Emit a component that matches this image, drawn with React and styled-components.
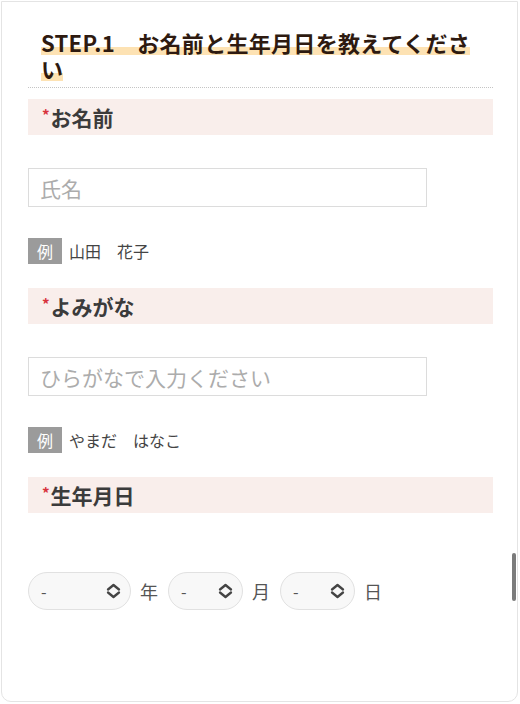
import React from 'react';
import styled, { createGlobalStyle } from 'styled-components';

const fields = [
	{ id: 'name', label: 'お名前', placeholder: '氏名', example: '山田　花子' },
	{ id: 'kana', label: 'よみがな', placeholder: 'ひらがなで入力ください', example: 'やまだ　はなこ' },
];

const dateParts = [
	{ id: 'year', unit: '年', width: 103 },
	{ id: 'month', unit: '月', width: 75 },
	{ id: 'day', unit: '日', width: 75 },
];

function UpDownIcon() {
	return (
		<svg width="15" height="16" viewBox="0 0 15 16" fill="none" stroke="#444" strokeWidth="2.3" strokeLinecap="round" strokeLinejoin="round">
			<path d="M2 6.5 L7.5 2 L13 6.5" />
			<path d="M2 9.5 L7.5 14 L13 9.5" />
		</svg>
	);
}

export default function App() {
	return (
		<>
			<GlobalStyle />
			<Card>
				<Inner>
					<Heading>
						<Marker>STEP.1　お名前と生年月日を教えてください</Marker>
					</Heading>

					{fields.map(field => (
						<Field key={field.id}>
							<Label>
								<Required>*</Required>
								{field.label}
							</Label>
							<TextInput placeholder={field.placeholder} />
							<Example>
								<ExampleBadge>例</ExampleBadge>
								<ExampleText>{field.example}</ExampleText>
							</Example>
						</Field>
					))}

					<Label>
						<Required>*</Required>
						生年月日
					</Label>
					<DateRow>
						{dateParts.map(part => (
							<DatePart key={part.id}>
								<SelectWrap $width={part.width}>
									<Select defaultValue="">
										<option value="">-</option>
									</Select>
									<IconSlot>
										<UpDownIcon />
									</IconSlot>
								</SelectWrap>
								<Unit>{part.unit}</Unit>
							</DatePart>
						))}
					</DateRow>
				</Inner>
				<ScrollThumb />
			</Card>
		</>
	);
}

const GlobalStyle = createGlobalStyle`
	* {
		box-sizing: border-box;
	}
	body {
		margin: 0;
		background: #fff;
		font-family: 'Noto Sans CJK JP', 'Noto Sans', sans-serif;
	}
`;

const Card = styled.div`
	position: relative;
	width: 517px;
	height: 701px;
	margin: 1px 0 0 1px;
	border: 1px solid #e4e4e4;
	border-radius: 0 0 10px 10px;
	overflow: hidden;
	background: #fff;
`;

const Inner = styled.div`
	padding: 27px 24px 0 26px;
`;

const Heading = styled.h2`
	margin: 0 0 11px 0;
	padding: 0 18px 6px 13px;
	font-size: 22px;
	line-height: 26px;
	font-weight: 700;
	letter-spacing: 0.3px;
	color: #2e1a10;
	border-bottom: 1px dotted #c4c4c4;
`;

const Marker = styled.span`
	background: linear-gradient(
		transparent 66%,
		#fde2b3 66%,
		#fde2b3 92%,
		transparent 92%
	);
`;

const Field = styled.div`
	margin-bottom: 24px;
`;

const Label = styled.div`
	display: flex;
	align-items: center;
	height: 36px;
	padding-left: 14px;
	background: #f9eeeb;
	font-size: 21px;
	font-weight: 700;
	color: #3b3b3b;
`;

const Required = styled.span`
	align-self: flex-start;
	margin-top: 8px;
	margin-right: 1px;
	font-size: 15px;
	line-height: 1;
	color: #d8323c;
`;

const TextInput = styled.input`
	display: block;
	width: 399px;
	height: 39px;
	margin: 33px 0 31px 0;
	padding: 0 11px;
	border: 1px solid #dcdcdc;
	border-radius: 0;
	font-family: inherit;
	font-size: 21px;
	color: #333;
	background: #fff;
	outline: none;

	&::placeholder {
		color: #acacac;
	}
`;

const Example = styled.div`
	display: flex;
	align-items: center;
	height: 26px;
`;

const ExampleBadge = styled.span`
	display: flex;
	align-items: center;
	justify-content: center;
	width: 34px;
	height: 26px;
	background: #9b9b9b;
	color: #fff;
	font-size: 16px;
`;

const ExampleText = styled.span`
	margin-left: 7px;
	font-size: 16px;
	color: #444;
`;

const DateRow = styled.div`
	display: flex;
	align-items: center;
	gap: 10px;
	margin-top: 59px;
`;

const DatePart = styled.div`
	display: flex;
	align-items: center;
	gap: 9px;
`;

const SelectWrap = styled.div`
	position: relative;
	width: ${p => p.$width}px;
	height: 38px;
`;

const Select = styled.select`
	appearance: none;
	width: 100%;
	height: 100%;
	padding: 0 0 0 12px;
	border: 1px solid #e1e1e1;
	border-radius: 19px;
	background: #f8f8f8;
	font-family: inherit;
	font-size: 16px;
	color: #555;
	outline: none;
`;

const IconSlot = styled.span`
	position: absolute;
	top: 11px;
	right: 10px;
	display: flex;
	pointer-events: none;
`;

const Unit = styled.span`
	font-size: 18px;
	color: #555;
`;

const ScrollThumb = styled.div`
	position: absolute;
	top: 551px;
	right: 1px;
	width: 4px;
	height: 48px;
	border-radius: 2px;
	background: #7b7b7b;
`;
